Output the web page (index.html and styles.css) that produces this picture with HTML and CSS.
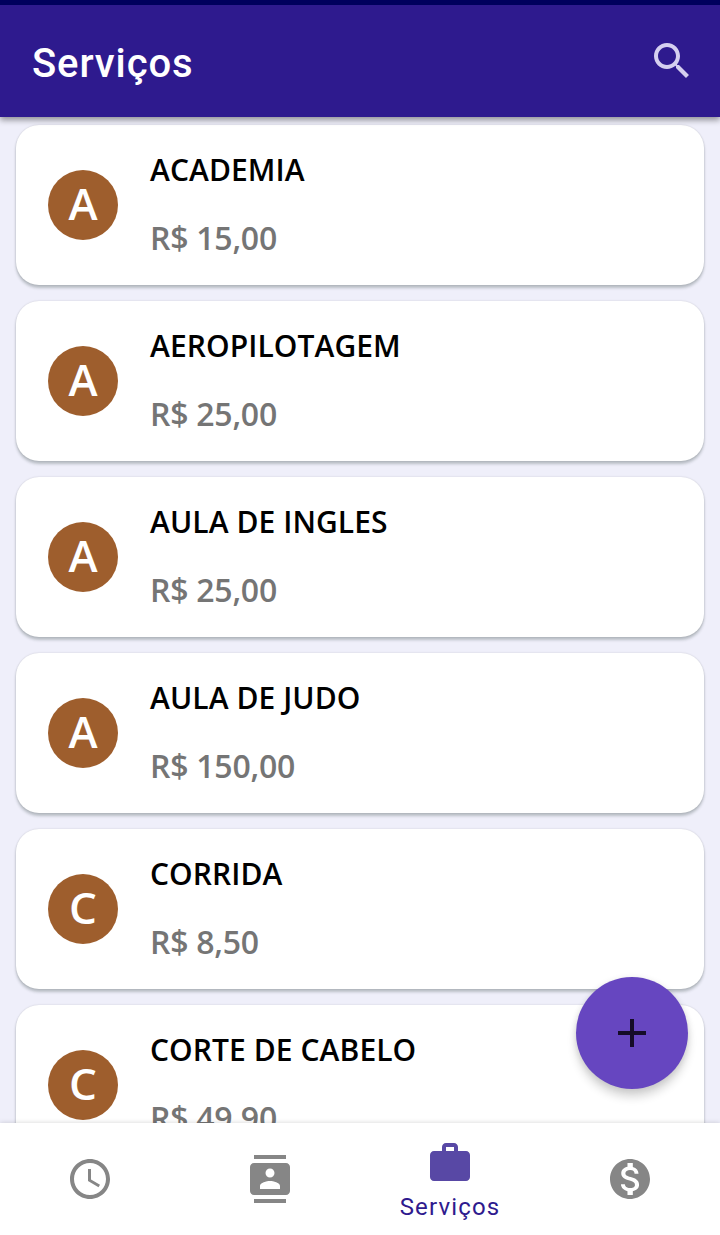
FILE: index.html
```html
<!DOCTYPE html>
<html lang="pt-BR">
<head>
<meta charset="utf-8">
<title>Serviços</title>
<link rel="stylesheet" href="styles.css">
</head>
<body>
<div class="app">
  <header class="app-bar">
    <h1 class="app-title">Serviços</h1>
    <svg class="icon search-icon" viewBox="0 0 24 24"><path d="M15.5 14h-.79l-.28-.27C15.41 12.59 16 11.11 16 9.5 16 5.91 13.09 3 9.5 3S3 5.91 3 9.5 5.91 16 9.5 16c1.61 0 3.09-.59 4.23-1.57l.27.28v.79l5 4.99L20.49 19l-4.99-5zm-6 0C7.01 14 5 11.99 5 9.5S7.01 5 9.5 5 14 7.01 14 9.5 11.99 14 9.5 14z"/></svg>
  </header>
  <main class="list">
    <article class="card"><div class="avatar">A</div><div class="details"><h2 class="name">ACADEMIA</h2><p class="price">R$ 15,00</p></div></article>
    <article class="card"><div class="avatar">A</div><div class="details"><h2 class="name">AEROPILOTAGEM</h2><p class="price">R$ 25,00</p></div></article>
    <article class="card"><div class="avatar">A</div><div class="details"><h2 class="name">AULA DE INGLES</h2><p class="price">R$ 25,00</p></div></article>
    <article class="card"><div class="avatar">A</div><div class="details"><h2 class="name">AULA DE JUDO</h2><p class="price">R$ 150,00</p></div></article>
    <article class="card"><div class="avatar">C</div><div class="details"><h2 class="name">CORRIDA</h2><p class="price">R$ 8,50</p></div></article>
    <article class="card"><div class="avatar">C</div><div class="details"><h2 class="name">CORTE DE CABELO</h2><p class="price">R$ 49,90</p></div></article>
  </main>
  <button class="fab" aria-label="Adicionar"><svg class="icon" viewBox="0 0 24 24"><path d="M19 13h-6v6h-2v-6H5v-2h6V5h2v6h6v2z"/></svg></button>
  <nav class="bottom-nav">
    <a class="tab"><svg class="icon" viewBox="0 0 24 24"><path d="M11.99 2C6.47 2 2 6.48 2 12s4.47 10 9.99 10C17.52 22 22 17.52 22 12S17.52 2 11.99 2zM12 20c-4.42 0-8-3.58-8-8s3.58-8 8-8 8 3.58 8 8-3.58 8-8 8z"/><path d="M12.5 7H11v6l5.25 3.15.75-1.23-4.5-2.67z"/></svg></a>
    <a class="tab"><svg class="icon" viewBox="0 0 24 24"><path d="M20 0H4v2h16V0zM4 24h16v-2H4v2zM20 4H4c-1.1 0-2 .9-2 2v12c0 1.1.9 2 2 2h16c1.1 0 2-.9 2-2V6c0-1.1-.9-2-2-2zm-8 2.75c1.24 0 2.25 1.01 2.25 2.25s-1.01 2.25-2.25 2.25S9.75 10.24 9.75 9 10.76 6.75 12 6.75zM17 17H7v-1.5c0-1.67 3.33-2.5 5-2.5s5 .83 5 2.5V17z"/></svg></a>
    <a class="tab tab-active"><svg class="icon" viewBox="0 0 24 24"><path d="M20 6h-4V4c0-1.11-.89-2-2-2h-4c-1.11 0-2 .89-2 2v2H4c-1.11 0-1.99.89-1.99 2L2 19c0 1.11.89 2 2 2h16c1.11 0 2-.89 2-2V8c0-1.11-.89-2-2-2zm-6 0h-4V4h4v2z"/></svg><span class="tab-label">Serviços</span></a>
    <a class="tab"><svg class="icon" viewBox="0 0 24 24"><path d="M12 2C6.48 2 2 6.48 2 12s4.48 10 10 10 10-4.48 10-10S17.52 2 12 2zm1.41 16.09V20h-2.67v-1.93c-1.71-.36-3.16-1.46-3.27-3.4h1.96c.1 1.05.82 1.87 2.65 1.87 1.96 0 2.4-.98 2.4-1.59 0-.83-.44-1.61-2.67-2.14-2.48-.6-4.18-1.62-4.18-3.67 0-1.72 1.39-2.84 3.11-3.21V4h2.67v1.95c1.86.45 2.79 1.86 2.85 3.39H14.3c-.05-1.11-.64-1.87-2.22-1.87-1.5 0-2.4.68-2.4 1.64 0 .84.65 1.39 2.67 1.91s4.18 1.39 4.18 3.91c-.01 1.83-1.38 2.83-3.12 3.16z"/></svg></a>
  </nav>
</div>
</body>
</html>
```
FILE: styles.css
```css
* { box-sizing: border-box; margin: 0; padding: 0; }
body { background: #efeffa; font-family: "Open Sans", "Noto Sans", sans-serif; }
.app { position: relative; display: flex; flex-direction: column; height: 1235px; overflow: hidden; }
.icon { display: block; flex: none; width: 48px; height: 48px; fill: currentColor; }
.app-bar {
  flex: none; display: flex; align-items: center; justify-content: space-between;
  height: 117px; padding: 0 24px 0 32px; border-top: 5px solid #00005d;
  background: #2e1a8e; color: #fff; z-index: 1;
  box-shadow: 0 3px 6px rgba(0, 0, 0, .4);
}
.app-title { font: 500 40px/48px Roboto, sans-serif; letter-spacing: .9px; padding-top: 6px; }
.search-icon { color: #d5cff0; }
.list { flex: 1; min-height: 0; overflow: hidden; display: flex; flex-direction: column; gap: 16px; padding: 8px 16px 0; }
.card {
  flex: none; display: flex; align-items: center; gap: 32px; height: 160px; padding: 0 32px;
  background: #fff; border-radius: 23px;
  box-shadow: 0 3px 3px rgba(30, 50, 45, .26), 0 0 2px rgba(0, 0, 0, .16);
}
.avatar {
  display: flex; align-items: center; justify-content: center; flex: none;
  width: 70px; height: 70px; border-radius: 50%; padding: 0 0 4px;
  background: #9e5e2d; color: #fff; font-size: 44px; font-weight: 600; line-height: 66px;
}
.details { display: flex; flex-direction: column; gap: 26px; }
.name { color: #000; font-size: 30px; font-weight: 600; line-height: 40px; letter-spacing: .08px; }
.price { color: #757575; font-size: 32px; font-weight: 600; line-height: 44px; letter-spacing: -.25px; }
.fab {
  position: absolute; right: 32px; bottom: 146px; width: 112px; height: 112px;
  display: flex; align-items: center; justify-content: center;
  border: 0; border-radius: 50%; background: #6646c0; color: #150c28;
  box-shadow: 0 8px 10px rgba(0, 0, 0, .16), 0 1px 6px rgba(0, 0, 0, .1);
}
.bottom-nav {
  flex: none; display: grid; grid-template-columns: repeat(4, 1fr); height: 112px;
  background: #fff; color: #868686; z-index: 1; box-shadow: 0 0 5px rgba(0, 0, 0, .17);
}
.tab { display: flex; flex-direction: column; align-items: center; justify-content: center; }
.tab-active { justify-content: flex-start; padding-top: 16px; color: #5848a5; }
.tab-label { color: #2e1a8e; font: 400 24px/28px Roboto, sans-serif; letter-spacing: 1.15px; margin-top: 6px; }
```
